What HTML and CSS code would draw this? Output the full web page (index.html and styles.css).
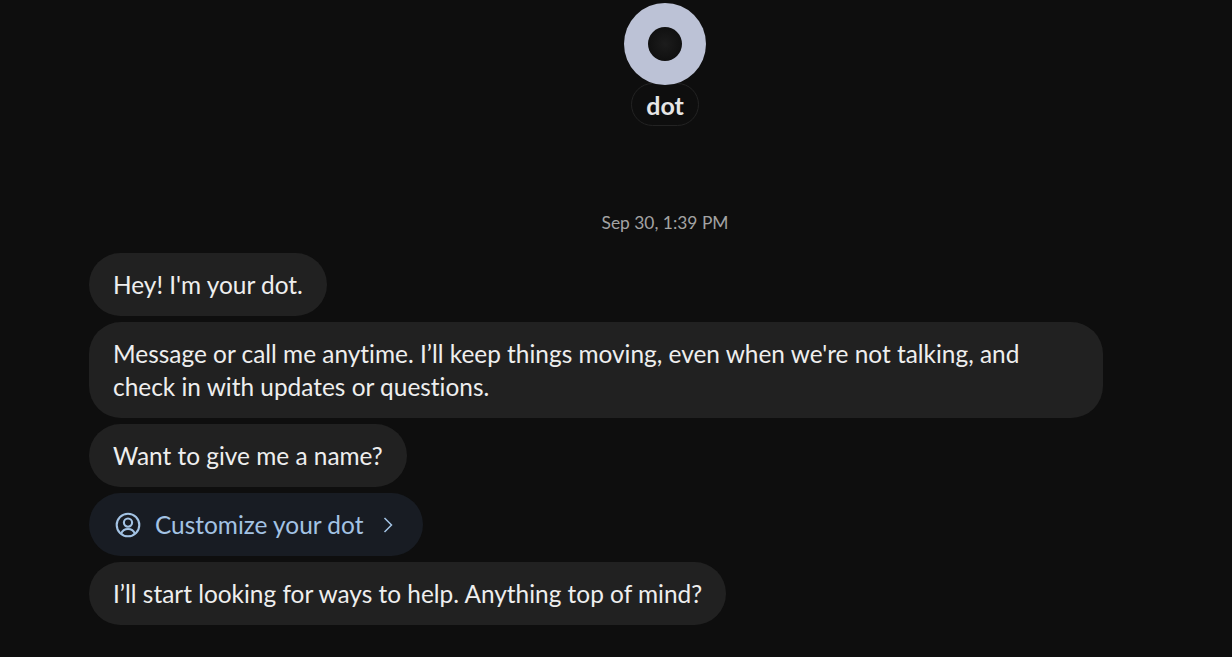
FILE: index.html
```html
<!DOCTYPE html>
<html lang="en">
<head>
<meta charset="utf-8">
<title>dot</title>
<link rel="stylesheet" href="styles.css">
</head>
<body>
<main class="chat">
  <header class="profile">
    <div class="avatar"><div class="avatar-hole"></div></div>
    <div class="name">dot</div>
  </header>
  <div class="timestamp">Sep 30, 1:39 PM</div>
  <section class="messages">
    <div class="bubble">Hey! I'm your dot.</div>
    <div class="bubble">Message or call me anytime. I’ll keep things moving, even when we're not talking, and check in with updates or questions.</div>
    <div class="bubble">Want to give me a name?</div>
    <div class="bubble action">
      <svg class="icon-user" viewBox="0 0 26 26" fill="none" stroke="currentColor" stroke-width="2.1">
        <circle cx="13" cy="13" r="11.3"/>
        <circle cx="13" cy="10.6" r="4.1"/>
        <path d="M6 21.8c1.4-3.2 4-4.8 7-4.8s5.6 1.6 7 4.8"/>
      </svg>
      <span>Customize your dot</span>
      <svg class="icon-chevron" viewBox="0 0 10 16" fill="none" stroke="currentColor" stroke-width="1.5">
        <path d="M1.5 1l7 7-7 7"/>
      </svg>
    </div>
    <div class="bubble">I’ll start looking for ways to help. Anything top of mind?</div>
  </section>
</main>
</body>
</html>
```

FILE: styles.css
```css
html, body {
  margin: 0;
  height: 100%;
  background: #0e0e0e;
  overflow: hidden;
}
body {
  font-family: "Lato", "Noto Sans", sans-serif;
  font-variant-ligatures: none;
  color: #eeeeee;
}
.chat {
  padding: 3px 0 0 89px;
}
.profile {
  display: flex;
  flex-direction: column;
  align-items: center;
  padding-left: 9px;
}
.avatar {
  position: relative;
  z-index: 1;
  width: 82px;
  height: 82px;
  border-radius: 50%;
  background: #bcc2d6;
  display: flex;
  align-items: center;
  justify-content: center;
}
.avatar-hole {
  width: 34px;
  height: 34px;
  border-radius: 50%;
  background: radial-gradient(circle at 50% 50%, #1c1c1c, #0b0b0b);
}
.name {
  margin-top: -2px;
  box-sizing: border-box;
  width: 68px;
  height: 43px;
  border: 1px solid #232323;
  border-radius: 22px;
  background: #0e0e0e;
  display: flex;
  align-items: center;
  justify-content: center;
  font-size: 25px;
  font-weight: 700;
  color: #e6e6e6;
}
.timestamp {
  margin-top: 85px;
  padding-left: 9px;
  text-align: center;
  font-size: 17.4px;
  line-height: 24px;
  color: #a3a3a3;
}
.messages {
  margin-top: 18px;
  display: flex;
  flex-direction: column;
  align-items: flex-start;
  gap: 6px;
}
.bubble {
  box-sizing: border-box;
  max-width: 1014px;
  padding: 15px 24px;
  border-radius: 32px;
  background: #212121;
  font-size: 24.42px;
  line-height: 33px;
}
.action {
  display: flex;
  align-items: center;
  background: #181c23;
  color: #a3c3e4;
}
.icon-user {
  width: 26px;
  height: 26px;
  margin-left: 2px;
  margin-right: 14px;
}
.icon-chevron {
  width: 10px;
  height: 16px;
  margin-left: 20px;
  margin-right: 6px;
}
```
